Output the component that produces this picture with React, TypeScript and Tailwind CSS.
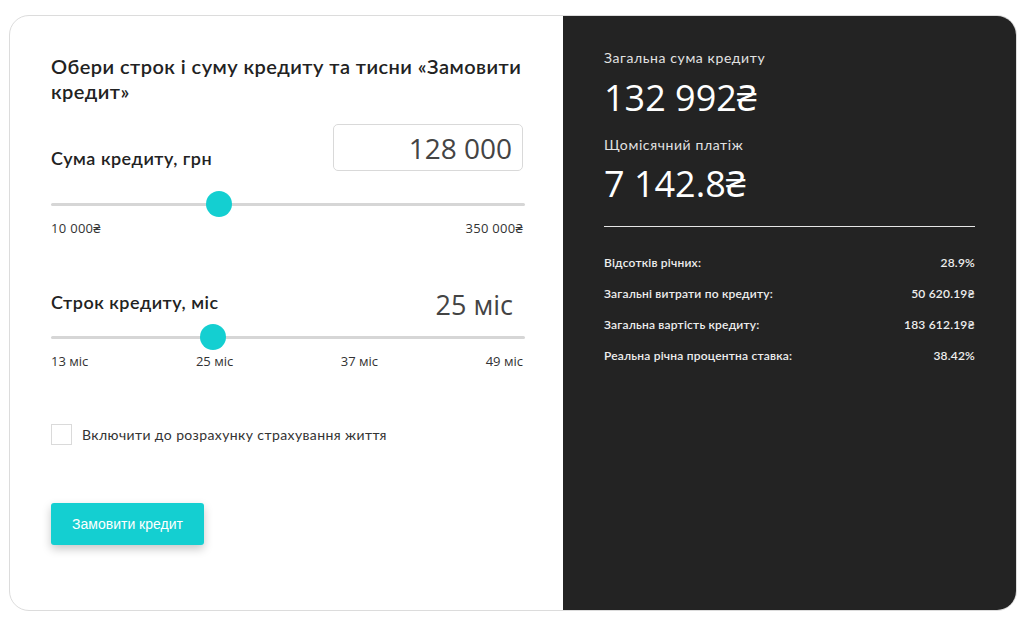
import React from 'react';

const sans = { fontFamily: 'Lato, "Noto Sans", sans-serif' };
const nums = { fontFamily: '"Open Sans", "Noto Sans", sans-serif' };

interface SliderProps {
  value: number;
  min: number;
  max: number;
}

const Slider = ({ value, min, max }: SliderProps) => {
  const ratio = (value - min) / (max - min);
  return (
    <div className="relative h-[26px] w-full">
      <div className="absolute left-0 right-0 top-[12px] h-[3px] rounded bg-[#d6d6d6]" />
      <div
        className="absolute top-0 h-[26px] w-[26px] rounded-full bg-[#14cfd1]"
        style={{ left: `calc(${ratio} * (100% - 26px))` }}
      />
    </div>
  );
};

const details = [
  { label: 'Відсотків річних:', value: '28.9%' },
  { label: 'Загальні витрати по кредиту:', value: '50 620.19₴' },
  { label: 'Загальна вартість кредиту:', value: '183 612.19₴' },
  { label: 'Реальна річна процентна ставка:', value: '38.42%' },
];

const App = () => {
  return (
    <div className="min-h-screen bg-white pl-[9px] pt-[15px]" style={sans}>
      <div className="flex h-[596px] w-[1008px] overflow-hidden rounded-[20px] border border-[#dcdcdc]">
        {/* left: controls */}
        <div className="flex w-[553px] flex-col pl-[41px] pr-[38px] pt-[38px] text-[#222]">
          <h2 className="whitespace-nowrap text-[20px] font-semibold leading-[25px] tracking-[0.45px]">
            Обери строк і суму кредиту та тисни «Замовити
            <br />
            кредит»
          </h2>

          <div className="mt-[20px] flex items-end justify-between">
            <span className="mb-[1px] text-[18px] font-semibold leading-[24px] tracking-[0.5px]">Сума кредиту, грн</span>
            <div
              className="mr-[2px] flex h-[47px] w-[190px] items-center justify-end rounded-[5px] border border-[#d9d9d9] pr-[10px] text-[28px] text-[#444]"
              style={nums}
            >
              128 000
            </div>
          </div>

          <div className="mt-[20px]">
            <Slider value={128000} min={10000} max={350000} />
          </div>
          <div className="mr-[2px] mt-[3px] flex justify-between text-[13px] leading-[16px] text-[#333]" style={nums}>
            <span className="tracking-[0.3px]">10 000₴</span>
            <span className="tracking-[0.3px]">350 000₴</span>
          </div>

          <div className="mt-[46px] flex h-[47px] items-center justify-between">
            <span className="mb-[8px] text-[18px] font-semibold leading-[24px] tracking-[0.5px]">Строк кредиту, міс</span>
            <div className="mr-[2px] pr-[10px] text-[27px] text-[#444]" style={nums}>
              25 міс
            </div>
          </div>

          <div className="mt-[-5px]">
            <Slider value={25} min={13} max={49} />
          </div>
          <div className="mr-[2px] mt-[3px] flex justify-between text-[13px] leading-[16px] text-[#333]" style={nums}>
            <span>13 міс</span>
            <span>25 міс</span>
            <span>37 міс</span>
            <span>49 міс</span>
          </div>

          <label className="mt-[55px] flex items-center gap-[10px]">
            <span className="h-[21px] w-[21px] border border-[#dadada] bg-white" />
            <span className="text-[14px] leading-[20px] tracking-[0.4px] text-[#333]">
              Включити до розрахунку страхування життя
            </span>
          </label>

          <button
            className="mt-[58px] h-[42px] w-[153px] rounded-[3px] bg-[#14cfd1] text-[14px] text-white shadow-[0_4px_10px_rgba(0,0,0,0.22)]"
            style={{ fontFamily: '"Liberation Sans", Arial, sans-serif' }}
          >
            Замовити кредит
          </button>
        </div>

        {/* right: summary */}
        <div className="flex flex-1 flex-col bg-[#232323] px-[41px] pt-[32px] text-white">
          <div className="text-[14px] leading-[20px] tracking-[0.6px] text-[#e2e2e2]">Загальна сума кредиту</div>
          <div className="mt-[8px] text-[36px] leading-[44px]" style={nums}>
            132 992₴
          </div>
          <div className="mt-[15px] text-[14px] leading-[20px] tracking-[0.6px] text-[#e2e2e2]">Щомісячний платіж</div>
          <div className="mt-[7px] text-[36px] leading-[44px]" style={nums}>
            7 142.8₴
          </div>
          <div className="mt-[20px] h-px w-full bg-[#e6e6e6]" />
          <div className="mt-[27px] flex flex-col gap-[13px]">
            {details.map((row) => (
              <div
                key={row.label}
                className="flex justify-between text-[12px] font-semibold leading-[18px] tracking-[0.2px] text-[#eeeeee]"
              >
                <span>{row.label}</span>
                <span>{row.value}</span>
              </div>
            ))}
          </div>
        </div>
      </div>
    </div>
  );
};

export default App;
